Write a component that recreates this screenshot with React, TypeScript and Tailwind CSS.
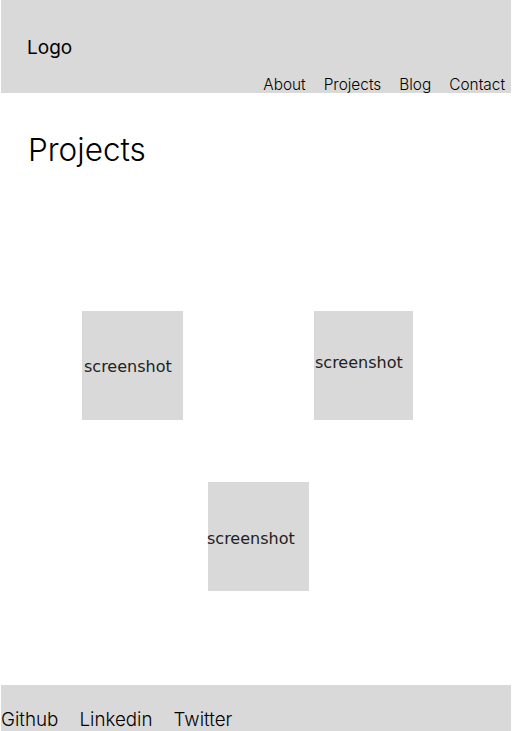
export default function App() {
  const inter = { fontFamily: 'Inter, "Noto Sans", sans-serif' }
  return (
    <div className="min-h-[731px] bg-white flex flex-col text-black" style={inter}>
      {/* header */}
      <header className="mx-px h-[93px] bg-[#d9d9d9] flex flex-col">
        <div className="pl-[26px] pt-[34px] text-[19px] leading-[27px]">Logo</div>
        <nav className="mt-auto flex justify-end gap-[18px] pr-[6px] text-[15.4px] leading-[16px] font-light">
          <a>About</a>
          <a>Projects</a>
          <a>Blog</a>
          <a>Contact</a>
        </nav>
      </header>

      <main className="flex-1 flex flex-col">
        <h1 className="pl-[28px] pt-[37px] text-[31.5px] leading-[40px] font-light">Projects</h1>

        <div className="mt-[141px] flex pl-[82px] gap-[131px]">
          <Shot className="w-[101px] pl-[2px] pt-[2px]" />
          <Shot className="w-[99px] pl-[1px] pb-[6px]" />
        </div>
        <div className="mt-[62px] flex pl-[208px]">
          <Shot className="w-[101px] -indent-px pt-[4px]" />
        </div>
      </main>

      <footer className="mt-[94px] mx-px h-[46px] bg-[#d9d9d9] flex items-end gap-[21px] text-[18.8px] leading-[22px] font-light">
        <a>Github</a>
        <a>Linkedin</a>
        <a>Twitter</a>
      </footer>
    </div>
  )
}

function Shot({ className }: { className: string }) {
  return (
    <div
      className={`h-[109px] bg-[#d9d9d9] flex items-center text-[16px] text-[#222] ${className}`}
      style={{ fontFamily: '"DejaVu Sans", sans-serif' }}
    >
      screenshot
    </div>
  )
}
